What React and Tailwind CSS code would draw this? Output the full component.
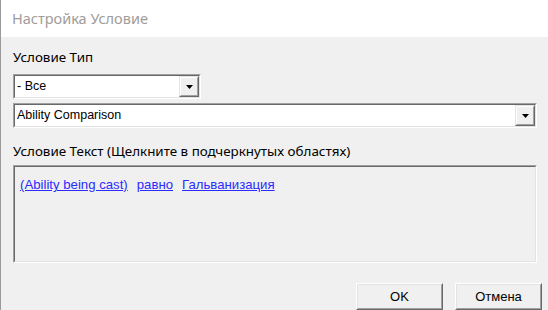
import React from 'react'

function Sunken({ className, children }) {
  return (
    <div className={`border border-t-[#a0a0a0] border-l-[#a0a0a0] border-b-white border-r-white ${className}`}>
      <div className="h-full border border-t-[#696969] border-l-[#696969] border-b-[#e3e3e3] border-r-[#e3e3e3]">
        {children}
      </div>
    </div>
  )
}

function DropButton() {
  return (
    <div className="w-[20px] h-full border border-t-[#e3e3e3] border-l-[#e3e3e3] border-b-[#696969] border-r-[#696969] bg-[#f0f0f0]">
      <div className="h-full flex items-center justify-center border border-t-white border-l-white border-b-[#a0a0a0] border-r-[#a0a0a0]">
        <svg width="7" height="4" viewBox="0 0 7 4">
          <path d="M0 0h7L3.5 4z" fill="#000" />
        </svg>
      </div>
    </div>
  )
}

function Combo({ value, className }) {
  return (
    <Sunken className={`h-[25px] ${className}`}>
      <div className="h-full flex bg-white">
        <div className="flex-1 flex items-center pl-[2px] text-[12.5px] text-black">{value}</div>
        <DropButton />
      </div>
    </Sunken>
  )
}

function WinButton({ children }) {
  return (
    <div className="w-[87px] h-[27px] border border-t-white border-l-white border-b-[#696969] border-r-[#696969] bg-[#f0f0f0]">
      <div className="h-full flex items-center justify-center border border-t-[#e3e3e3] border-l-[#e3e3e3] border-b-[#a0a0a0] border-r-[#a0a0a0] text-[13px] text-black">
        {children}
      </div>
    </div>
  )
}

export default function App() {
  return (
    <div className="w-[548px] h-[310px] overflow-hidden flex flex-col border-l border-[#9a9a9a] bg-[#f0f0f0] font-['Liberation_Sans',Arial,sans-serif]">
      <div className="h-[37px] bg-white flex items-center pl-[11px] text-[14.5px] text-[#a09c99] font-['Noto_Sans','Open_Sans',sans-serif]">
        Настройка Условие
      </div>
      <div className="flex flex-col pl-[12px] pr-[11px]">
        <div className="mt-[12px] text-[13.4px] leading-[16px] text-black font-['Noto_Sans',sans-serif]">Условие Тип</div>
        <Combo value="- Все" className="mt-[9px] w-[188px]" />
        <Combo value="Ability Comparison" className="mt-[4px] w-full" />
        <div className="mt-[15px] text-[13.4px] leading-[16px] text-black font-['Noto_Sans',sans-serif]">Условие Текст (Щелкните в подчеркнутых областях)</div>
        <Sunken className="mt-[6px] h-[98px] w-full">
          <div className="h-full bg-[#f0f0f0] flex items-start gap-[9px] pl-[5px] pt-[8px] text-[13.2px] text-[#2b2bff]">
            <span className="underline">(Ability being cast)</span>
            <span className="underline">равно</span>
            <span className="underline">Гальванизация</span>
          </div>
        </Sunken>
      </div>
      <div className="flex justify-end gap-[12px] pr-[6px] mt-[20px]">
        <WinButton>OK</WinButton>
        <WinButton>Отмена</WinButton>
      </div>
    </div>
  )
}
